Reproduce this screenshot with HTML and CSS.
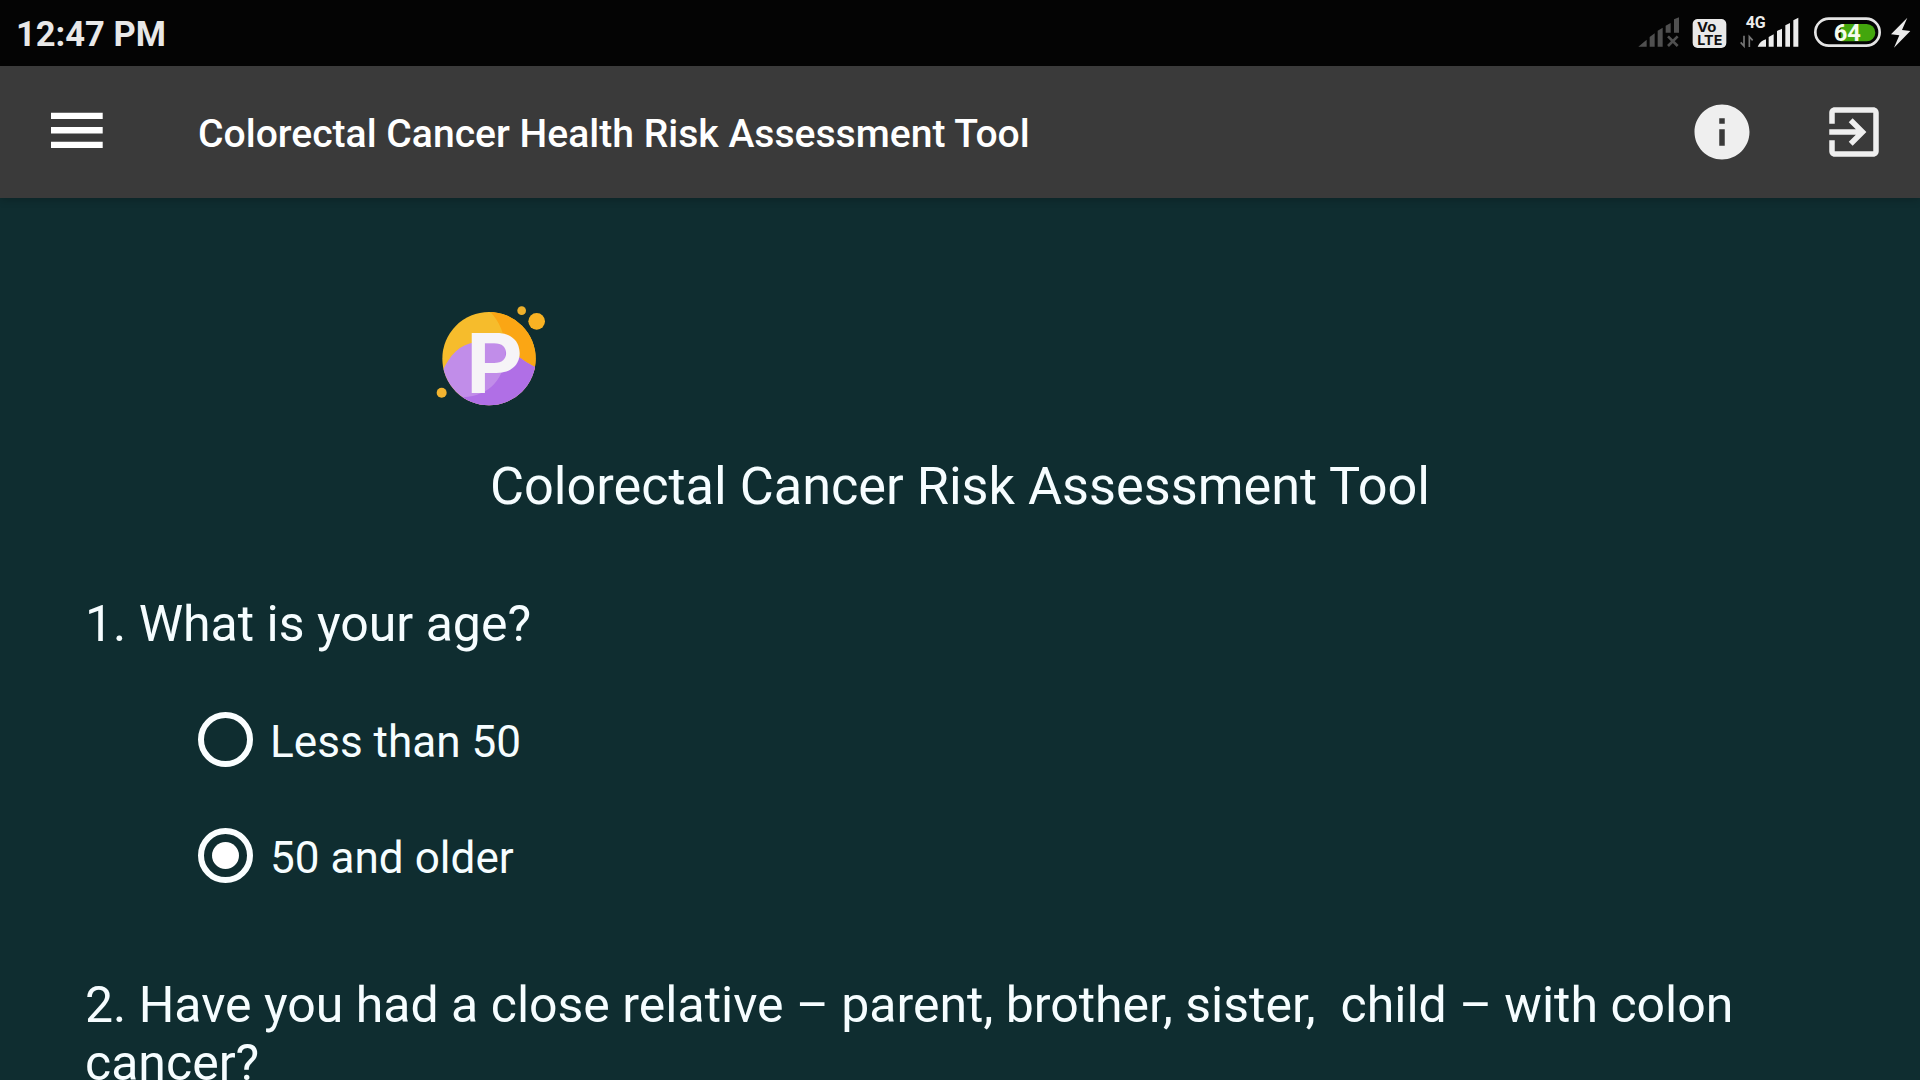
FILE: index.html
```html
<!DOCTYPE html>
<html lang="en">
<head>
<meta charset="utf-8">
<title>Colorectal Cancer Health Risk Assessment Tool</title>
<link rel="stylesheet" href="styles.css">
</head>
<body>
<div class="status">
  <span class="clock">12:47 PM</span>
  <div class="status-icons">
    <svg width="50" height="66" viewBox="45 0 150 198" fill="#505050">
      <path d="M55 140L80 119V140ZM89 111L104 100V140H89ZM113 92L128 83V140H113ZM137 77L152 69V98H137ZM162 58L177 52V98H162Z"/>
      <path d="M144 109L173 138M173 109L144 138" stroke="#505050" stroke-width="8"/>
    </svg>
    <svg width="50" height="66" viewBox="195 0 150 198">
      <rect x="218" y="57" width="101" height="87" rx="15" fill="#e9e9e9"/>
      <text class="volte" x="231" y="96" textLength="58" lengthAdjust="spacingAndGlyphs">Vo</text>
      <text class="volte" x="232" y="135" textLength="75" lengthAdjust="spacingAndGlyphs">LTE</text>
    </svg>
    <svg width="70" height="66" viewBox="345 0 210 198" fill="#ececec">
      <text class="network" x="377" y="84">4G</text>
      <path d="M413 140C418 128 427 121 438 118V140ZM446 111L461 103V140H446ZM471 93L486 86V140H471ZM496 76L510 69V140H496ZM520 61L535 53V140H520Z"/>
      <path d="M372 107V138L362 127M388 141V110L398 121" fill="none" stroke="#777" stroke-width="5"/>
    </svg>
    <svg width="80" height="66" viewBox="555 0 240 198">
      <rect x="586" y="56" width="193" height="81" rx="40.500" fill="none" stroke="#e4e4e4" stroke-width="8"/>
      <path d="M662 72H740A26 26 0 0 1 740 124H662Z" fill="#43a60d"/>
      <text class="charge" x="641" y="122">64</text>
    </svg>
    <svg width="35" height="66" viewBox="795 0 105 198">
      <path d="M862 53L813 103L838 106L822 143L871 93L846 90Z" fill="#ececec"/>
    </svg>
  </div>
</div>
<header class="appbar">
  <svg class="menu" width="52" height="36" viewBox="0 0 52 36" fill="#fff">
    <path d="M0 .7H51.700V7H0ZM0 15.100H51.700V21.400H0ZM0 29.700H51.700V36H0Z"/>
  </svg>
  <h1 class="appbar-title">Colorectal Cancer Health Risk Assessment Tool</h1>
  <div class="actions">
    <svg width="66" height="66" viewBox="0 0 24 24" fill="#efefef">
      <path d="M12 2C6.480 2 2 6.480 2 12s4.480 10 10 10 10-4.480 10-10S17.520 2 12 2zm1 15h-2v-6h2v6zm0-8h-2V7h2v2z"/>
    </svg>
    <svg width="66" height="66" viewBox="0 0 24 24" fill="#efefef">
      <path d="M10.090 15.590L11.500 17l5-5-5-5-1.410 1.410L12.670 11H3v2h9.670l-2.580 2.590zM19 3H5c-1.110 0-2 .9-2 2v4h2V5h14v14H5v-4H3v4c0 1.100.89 2 2 2h14c1.100 0 2-.9 2-2V5c0-1.100-.9-2-2-2z"/>
    </svg>
  </div>
</header>
<main class="page">
  <svg class="logo" width="140" height="130" viewBox="0 0 420 390">
    <clipPath id="disc"><circle cx="207" cy="206" r="140"/></clipPath>
    <g clip-path="url(#disc)">
      <rect x="60" y="60" width="300" height="300" fill="#f6bc2c"/>
      <path d="M205 60C236 88 254 130 258 180L360 260V60Z" fill="#fba614"/>
      <path d="M60 260C85 200 115 164 165 157C215 146 255 160 285 192C305 208 325 222 360 238V360H60Z" fill="#c18de9"/>
      <path d="M257 165C270 172 280 186 285 192C305 208 325 222 360 238V360H100L130 322C215 316 262 260 257 165Z" fill="#b06fe6"/>
    </g>
    <circle cx="305" cy="62" r="13" fill="#eeb02b"/>
    <circle cx="350" cy="94" r="25" fill="#f9b223"/>
    <circle cx="65" cy="308" r="15" fill="#f2b430"/>
    <text class="logo-letter" x="138" y="308" textLength="171" lengthAdjust="spacingAndGlyphs">P</text>
  </svg>
  <h2 class="title">Colorectal Cancer Risk Assessment Tool</h2>
  <section class="question">
    <p class="prompt">1. What is your age?</p>
    <div class="options">
      <div class="option"><span class="radio"></span><span class="label">Less than 50</span></div>
      <div class="option"><span class="radio checked"></span><span class="label">50 and older</span></div>
    </div>
  </section>
  <section class="question">
    <p class="prompt">2. Have you had a close relative – parent, brother, sister,&nbsp; child – with colon cancer?</p>
  </section>
</main>
</body>
</html>
```
FILE: styles.css
```css
* { box-sizing: border-box; }

body {
  margin: 0;
  height: 1080px;
  overflow: hidden;
  display: flex;
  flex-direction: column;
  background: #0f2d30;
  color: #f6fdff;
  font-family: Roboto, sans-serif;
}

svg { display: block; flex: none; }

.status {
  flex: none;
  display: flex;
  justify-content: space-between;
  align-items: center;
  height: 66px;
  padding-left: 16px;
  background: #040404;
}

.clock {
  padding-top: 2px;
  font-size: 34.5px;
  font-weight: 700;
  color: #e8e8e8;
}

.status-icons { display: flex; }

.volte {
  font: 700 40px Inter, sans-serif;
  fill: #111;
}

.network { font: 700 48px Roboto, sans-serif; }

.charge {
  font: 700 71px Roboto, sans-serif;
  fill: #f4fbef;
}

.appbar {
  flex: none;
  display: flex;
  align-items: center;
  height: 132px;
  padding: 0 33px 0 51px;
  background: #3a3a3a;
  box-shadow: 0 2px 8px rgba(0, 0, 0, .2);
}

.menu { margin-top: -4px; }

.appbar-title {
  flex: 1;
  margin: 0 0 0 95px;
  padding-top: 3px;
  font-size: 39.1px;
  font-weight: 500;
  color: #fff;
}

.actions {
  display: flex;
  gap: 66px;
}

.page {
  flex: 1;
  min-height: 0;
  padding: 92px 85px 0;
}

.logo { margin-left: 335px; }

.logo-letter {
  font: 700 247px Inter, sans-serif;
  fill: #f6f4f7;
}

.title {
  margin: 37px 0 78px;
  font-size: 52.25px;
  line-height: 60px;
  font-weight: 400;
  text-align: center;
}

.prompt {
  margin: 0;
  font-size: 50px;
  line-height: 58px;
}

.options {
  padding: 29px 0 62px 113px;
}

.option {
  display: flex;
  align-items: center;
  gap: 17px;
  height: 116px;
}

.radio {
  display: grid;
  place-items: center;
  width: 55px;
  height: 55px;
  margin-bottom: 1px;
  border: 6px solid #fafeff;
  border-radius: 50%;
}

.radio.checked::after {
  content: "";
  width: 27px;
  height: 27px;
  border-radius: 50%;
  background: #fff;
}

.label {
  padding-top: 4px;
  font-size: 44.1px;
}
```
